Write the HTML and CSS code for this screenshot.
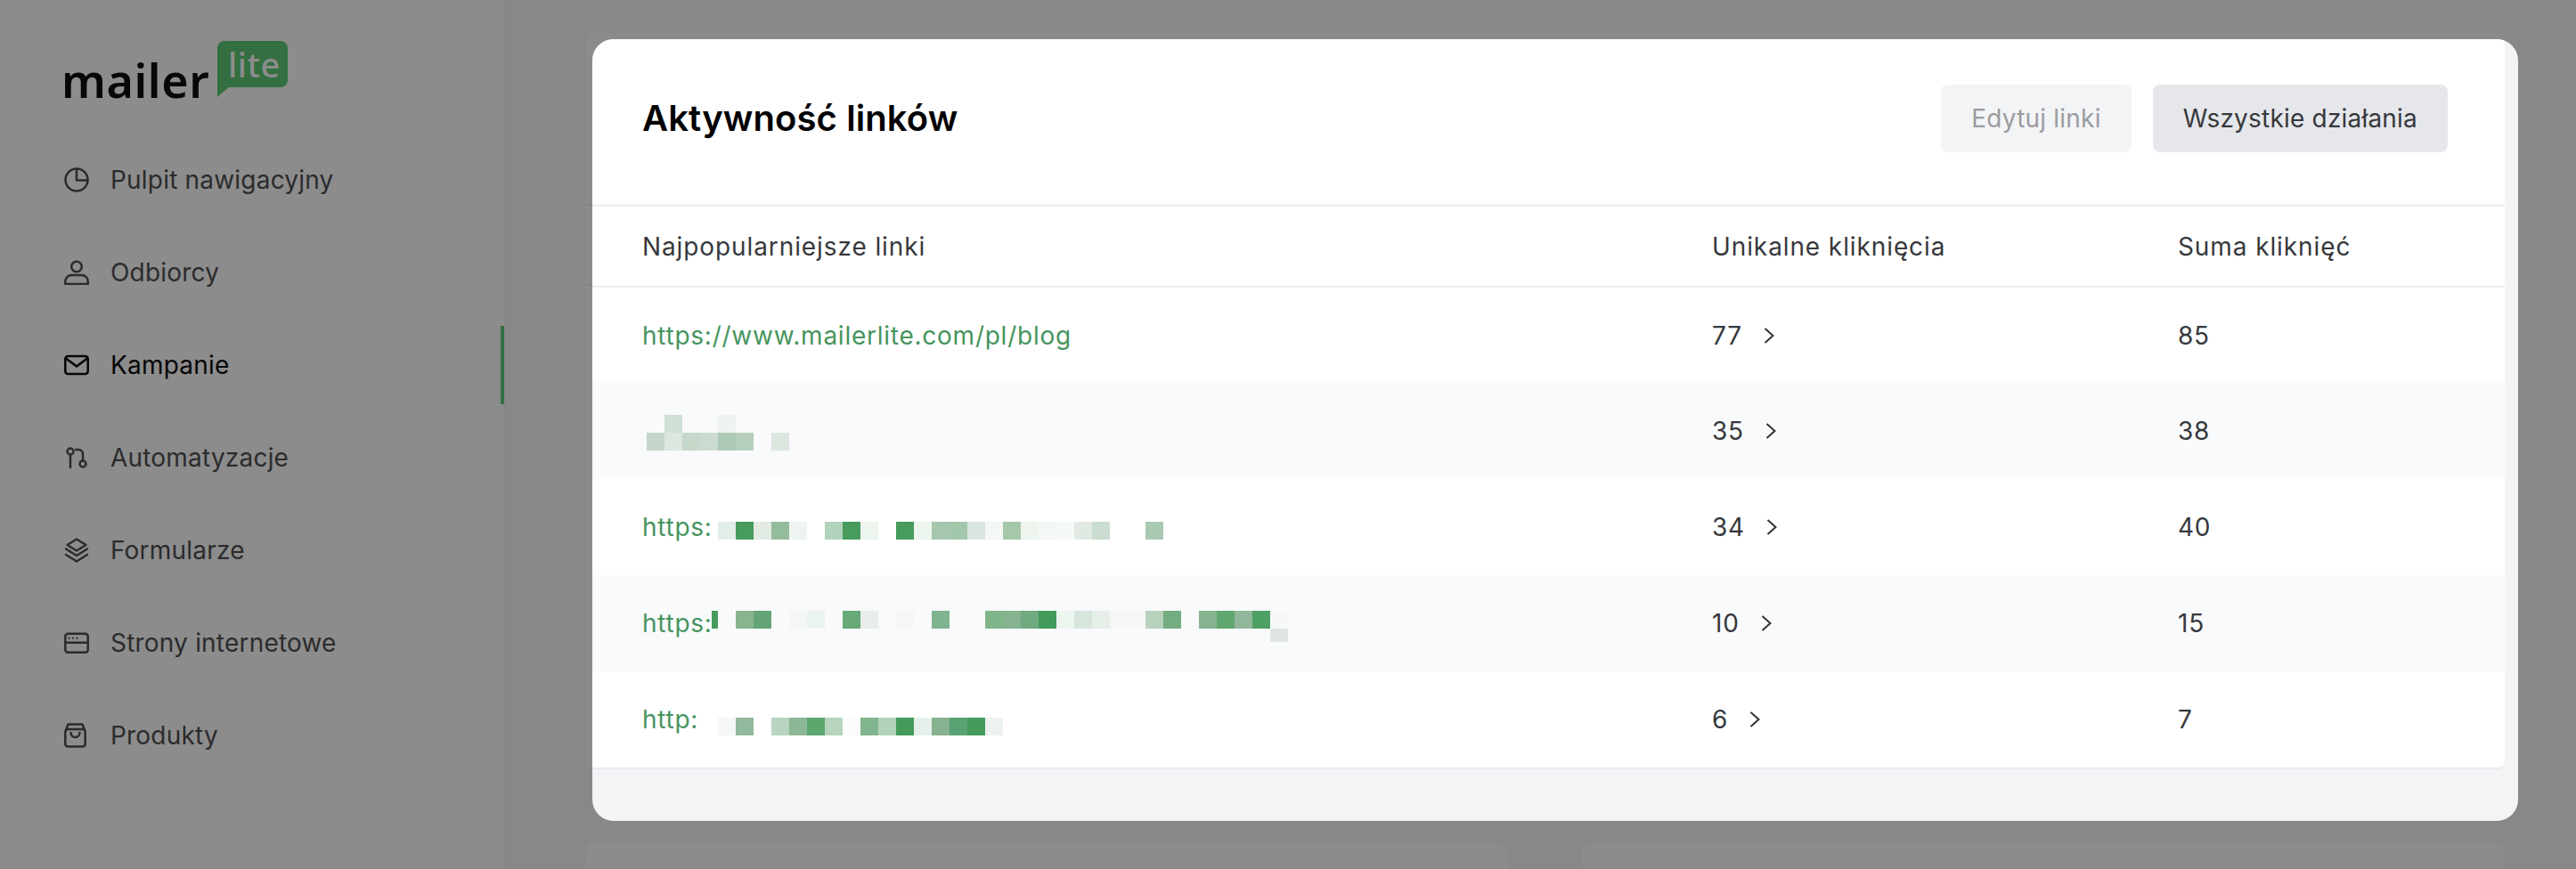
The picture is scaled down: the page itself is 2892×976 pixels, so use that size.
FILE: index.html
```html
<!DOCTYPE html>
<html lang="pl">
<head>
  <meta charset="utf-8">
  <title>Aktywność linków</title>
  <link rel="stylesheet" href="styles.css">
</head>
<body>
  <div class="page">
    <aside class="sidebar">
      <div class="logo">
        <span class="logo-mailer">mailer</span>
        <span class="logo-lite">
          <svg class="logo-bubble" width="79" height="63" viewBox="0 0 79 63"><path d="M8 0h63a8 8 0 0 1 8 8v36a8 8 0 0 1-8 8H13L0 63V8a8 8 0 0 1 8-8z"/></svg>
          <span class="logo-lite-text">lite</span>
        </span>
      </div>
      <nav class="nav">
        <a class="nav-item">
          <svg class="nav-icon" viewBox="0 0 28 28"><circle cx="14" cy="14" r="12.5"/><path d="M14 2v12.5h12.5"/></svg>
          Pulpit nawigacyjny
        </a>
        <a class="nav-item">
          <svg class="nav-icon" viewBox="0 0 28 28"><circle cx="14" cy="7.5" r="5.8"/><path d="M1.3 27v-3a7 7 0 0 1 7-7h11.4a7 7 0 0 1 7 7v3z"/></svg>
          Odbiorcy
        </a>
        <a class="nav-item active">
          <svg class="nav-icon" viewBox="0 0 28 28"><rect x="1.3" y="4" width="25.4" height="20" rx="3"/><path d="M2 6.5l12 9 12-9"/></svg>
          Kampanie
        </a>
        <a class="nav-item">
          <svg class="nav-icon" viewBox="0 0 28 28"><circle cx="7" cy="7" r="3.5"/><path d="M7 10.5V25M13 5h3a5 5 0 0 1 5 5v7.5"/><circle cx="21" cy="21" r="3.5"/></svg>
          Automatyzacje
        </a>
        <a class="nav-item">
          <svg class="nav-icon" viewBox="0 0 28 28"><path d="M14 1.5l10.5 6.5L14 14.5 3.500 8z"/><path d="M2 12.500l12 7.500 12-7.500M2 19l12 7.500L26 19"/></svg>
          Formularze
        </a>
        <a class="nav-item">
          <svg class="nav-icon" viewBox="0 0 28 28"><rect x="1.300" y="3.800" width="25.400" height="21" rx="3"/><path d="M1.300 13.800h25.400"/><circle class="dot" cx="5.500" cy="8.800" r="1.100"/><circle class="dot" cx="10" cy="8.800" r="1.100"/><circle class="dot" cx="14.500" cy="8.800" r="1.100"/></svg>
          Strony internetowe
        </a>
        <a class="nav-item">
          <svg class="nav-icon" viewBox="0 0 28 28"><rect x="1.300" y="7" width="22.400" height="19.500" rx="3"/><path d="M2 8l2.500-6.500h16L23 8M7.500 11a5 5 0 0 0 10 0"/></svg>
          Produkty
        </a>
      </nav>
    </aside>

    <main class="content">
      <section class="card card-wide">
        <div class="card-head"></div>
        <div class="card-cols"></div>
      </section>
      <section class="card"></section>
      <section class="card"></section>
    </main>

    <div class="modal">
      <div class="panel">
        <header class="panel-head">
          <h2 class="panel-title">Aktywność linków</h2>
          <div class="panel-actions">
            <button class="btn btn-disabled">Edytuj linki</button>
            <button class="btn">Wszystkie działania</button>
          </div>
        </header>
        <table class="links">
          <thead>
            <tr>
              <th>Najpopularniejsze linki</th>
              <th>Unikalne kliknięcia</th>
              <th>Suma kliknięć</th>
            </tr>
          </thead>
          <tbody>
            <tr>
              <td><a class="link">https://www.mailerlite.com/pl/blog</a></td>
              <td><span class="count">77 <svg class="chevron" viewBox="0 0 12 18"><path d="M1.500 1l9 8-9 8"/></svg></span></td>
              <td>85</td>
            </tr>
            <tr>
              <td>
                <svg class="mosaic" width="760" height="108">
                  <rect x="20" y="36" width="20" height="20" fill="#cfe0d6"/>
                  <rect x="80" y="36" width="20" height="20" fill="#eff3f0"/>
                  <rect x="0" y="56" width="20" height="20" fill="#c4d6cb"/>
                  <rect x="20" y="56" width="20" height="20" fill="#dde7e0"/>
                  <rect x="40" y="56" width="20" height="20" fill="#c5d8ca"/>
                  <rect x="60" y="56" width="20" height="20" fill="#cbdbd0"/>
                  <rect x="80" y="56" width="20" height="20" fill="#abc9b5"/>
                  <rect x="100" y="56" width="20" height="20" fill="#b5cfbc"/>
                  <rect x="140" y="56" width="20" height="20" fill="#dbe6df"/>
                </svg>
              </td>
              <td><span class="count">35 <svg class="chevron" viewBox="0 0 12 18"><path d="M1.500 1l9 8-9 8"/></svg></span></td>
              <td>38</td>
            </tr>
            <tr>
              <td>
                <a class="link">https:</a>
                <svg class="mosaic" width="760" height="108">
                  <rect x="80" y="48" width="20" height="20" fill="#e3eee8"/>
                  <rect x="100" y="48" width="20" height="20" fill="#479b5d"/>
                  <rect x="120" y="48" width="20" height="20" fill="#e2eae4"/>
                  <rect x="140" y="48" width="20" height="20" fill="#93bc9c"/>
                  <rect x="160" y="48" width="20" height="20" fill="#eef5f0"/>
                  <rect x="200" y="48" width="20" height="20" fill="#b1d2bc"/>
                  <rect x="220" y="48" width="20" height="20" fill="#479b5d"/>
                  <rect x="240" y="48" width="20" height="20" fill="#ecf5ee"/>
                  <rect x="280" y="48" width="20" height="20" fill="#479b5d"/>
                  <rect x="300" y="48" width="20" height="20" fill="#ecf5ee"/>
                  <rect x="320" y="48" width="20" height="20" fill="#a7c6ae"/>
                  <rect x="340" y="48" width="20" height="20" fill="#a3c7ab"/>
                  <rect x="360" y="48" width="20" height="20" fill="#dbe5df"/>
                  <rect x="380" y="48" width="20" height="20" fill="#f4f8f5"/>
                  <rect x="400" y="48" width="20" height="20" fill="#a5c8aa"/>
                  <rect x="420" y="48" width="20" height="20" fill="#eef5ef"/>
                  <rect x="440" y="48" width="20" height="20" fill="#f3f8f4"/>
                  <rect x="460" y="48" width="20" height="20" fill="#f6faf6"/>
                  <rect x="480" y="48" width="20" height="20" fill="#e1e9e3"/>
                  <rect x="500" y="48" width="20" height="20" fill="#c9dccf"/>
                  <rect x="560" y="48" width="20" height="20" fill="#a9c9b2"/>
                </svg>
              </td>
              <td><span class="count">34 <svg class="chevron" viewBox="0 0 12 18"><path d="M1.500 1l9 8-9 8"/></svg></span></td>
              <td>40</td>
            </tr>
            <tr>
              <td>
                <a class="link">https:</a>
                <svg class="mosaic" width="760" height="108">
                  <rect x="73" y="40" width="7" height="20" fill="#479b5d"/>
                  <rect x="100" y="40" width="20" height="20" fill="#88b490"/>
                  <rect x="120" y="40" width="20" height="20" fill="#64a575"/>
                  <rect x="160" y="40" width="20" height="20" fill="#f5f7f6"/>
                  <rect x="180" y="40" width="20" height="20" fill="#ebf3ee"/>
                  <rect x="220" y="40" width="20" height="20" fill="#67a977"/>
                  <rect x="240" y="40" width="20" height="20" fill="#e8efea"/>
                  <rect x="280" y="40" width="20" height="20" fill="#f5f7f6"/>
                  <rect x="320" y="40" width="20" height="20" fill="#80b38f"/>
                  <rect x="340" y="40" width="20" height="20" fill="#f9faf9"/>
                  <rect x="380" y="40" width="20" height="20" fill="#80b58a"/>
                  <rect x="400" y="40" width="20" height="20" fill="#85b390"/>
                  <rect x="420" y="40" width="20" height="20" fill="#71a980"/>
                  <rect x="440" y="40" width="20" height="20" fill="#439b5b"/>
                  <rect x="460" y="40" width="20" height="20" fill="#edf5ef"/>
                  <rect x="480" y="40" width="20" height="20" fill="#d7e5dc"/>
                  <rect x="500" y="40" width="20" height="20" fill="#e6f0e8"/>
                  <rect x="520" y="40" width="20" height="20" fill="#f5f8f6"/>
                  <rect x="540" y="40" width="20" height="20" fill="#f5f8f6"/>
                  <rect x="560" y="40" width="20" height="20" fill="#b7d1bc"/>
                  <rect x="580" y="40" width="20" height="20" fill="#72ac7f"/>
                  <rect x="620" y="40" width="20" height="20" fill="#85b28f"/>
                  <rect x="640" y="40" width="20" height="20" fill="#60a66f"/>
                  <rect x="660" y="40" width="20" height="20" fill="#92b69a"/>
                  <rect x="680" y="40" width="20" height="20" fill="#4da165"/>
                  <rect x="700" y="40" width="20" height="20" fill="#f7f9f7"/>
                  <rect x="700" y="60" width="20" height="15" fill="#dfe6e2"/>
                </svg>
              </td>
              <td><span class="count">10 <svg class="chevron" viewBox="0 0 12 18"><path d="M1.500 1l9 8-9 8"/></svg></span></td>
              <td>15</td>
            </tr>
            <tr>
              <td>
                <a class="link">http:</a>
                <svg class="mosaic" width="760" height="108">
                  <rect x="80" y="52" width="20" height="20" fill="#f5f8f6"/>
                  <rect x="100" y="52" width="20" height="20" fill="#92b99b"/>
                  <rect x="140" y="52" width="20" height="20" fill="#b9d4c0"/>
                  <rect x="160" y="52" width="20" height="20" fill="#8cb897"/>
                  <rect x="180" y="52" width="20" height="20" fill="#5ca76e"/>
                  <rect x="200" y="52" width="20" height="20" fill="#b7d4bd"/>
                  <rect x="220" y="52" width="20" height="20" fill="#fbfcfb"/>
                  <rect x="240" y="52" width="20" height="20" fill="#80b58e"/>
                  <rect x="260" y="52" width="20" height="20" fill="#b3d3b9"/>
                  <rect x="280" y="52" width="20" height="20" fill="#439b5b"/>
                  <rect x="300" y="52" width="20" height="20" fill="#e6f0ea"/>
                  <rect x="320" y="52" width="20" height="20" fill="#87b28f"/>
                  <rect x="340" y="52" width="20" height="20" fill="#58a273"/>
                  <rect x="360" y="52" width="20" height="20" fill="#439b5b"/>
                  <rect x="380" y="52" width="20" height="20" fill="#ecf2ee"/>
                </svg>
              </td>
              <td><span class="count">6 <svg class="chevron" viewBox="0 0 12 18"><path d="M1.500 1l9 8-9 8"/></svg></span></td>
              <td>7</td>
            </tr>
          </tbody>
        </table>
      </div>
    </div>
  </div>
</body>
</html>
```

FILE: styles.css
```css
* {
  box-sizing: border-box;
}
body {
  margin: 0;
  font-family: "Inter", "Liberation Sans", sans-serif;
  background: #87888a;
}
.page {
  position: relative;
  display: flex;
  height: 976px;
  overflow: hidden;
}

/* sidebar */
.sidebar {
  flex: 0 0 567px;
  padding: 46px 0 0 72px;
  background: #8c8c8c;
  border-right: 1px solid #858586;
}
.logo {
  position: relative;
  height: 64px;
}
.logo-mailer {
  position: absolute;
  left: -3px;
  top: 8px;
  font-family: "Noto Sans", sans-serif;
  font-size: 52px;
  font-weight: 600;
  line-height: 71px;
  letter-spacing: 0.6px;
  color: #070707;
}
.logo-lite {
  position: absolute;
  left: 172px;
  top: 0;
  width: 79px;
  height: 63px;
}
.logo-bubble {
  display: block;
  fill: #346f41;
}
.logo-lite-text {
  position: absolute;
  left: 12px;
  top: 0;
  font-family: "Noto Sans", sans-serif;
  font-size: 38px;
  font-weight: 500;
  line-height: 52px;
  letter-spacing: 0.5px;
  color: #8c8c8c;
}
.nav {
  display: flex;
  flex-direction: column;
  gap: 16px;
  margin-top: 48px;
}
.nav-item {
  position: relative;
  display: flex;
  align-items: center;
  gap: 24px;
  height: 88px;
  font-size: 28px;
  letter-spacing: 0.2px;
  color: #2b2b2c;
}
.nav-item.active {
  color: #060606;
}
.nav-item.active::after {
  content: "";
  position: absolute;
  top: 0;
  right: 0;
  width: 4px;
  height: 88px;
  background: #346f41;
}
.nav-icon {
  flex: 0 0 28px;
  width: 28px;
  height: 28px;
  fill: none;
  stroke: currentColor;
  stroke-width: 2.5;
  stroke-linecap: round;
  stroke-linejoin: round;
}
.nav-icon .dot {
  fill: currentColor;
  stroke: none;
}

/* dimmed cards behind the modal */
.content {
  flex: 1;
  display: grid;
  grid-template-columns: 1035px 1035px;
  grid-template-rows: 825px 200px;
  gap: 84px 83px;
  padding: 37px 0 0 91px;
}
.card {
  background: #8b8b8b;
  border-radius: 8px;
}
.card-wide {
  grid-column: 1 / 3;
}
.card-head {
  height: 194px;
  border-bottom: 2px solid #838384;
}
.card-cols {
  height: 90px;
  border-bottom: 2px solid #838384;
}

/* modal */
.modal {
  position: absolute;
  left: 665px;
  top: 44px;
  width: 2162px;
  height: 878px;
  overflow: hidden;
  background: #f3f4f6;
  border-radius: 24px;
}
.panel {
  width: 2147px;
  background: #fff;
  border-bottom: 2px solid #eaebef;
  border-radius: 0 0 8px 0;
}
.panel-head {
  display: flex;
  align-items: flex-start;
  justify-content: space-between;
  height: 188px;
  padding: 51px 64px 0 56px;
  border-bottom: 2px solid #ebebf0;
}
.panel-title {
  margin: 0;
  font-size: 40px;
  font-weight: 600;
  line-height: 76px;
  letter-spacing: 0.1px;
  color: #000;
}
.panel-actions {
  display: flex;
  gap: 24px;
}
.btn {
  height: 76px;
  padding: 0 34px;
  border: none;
  border-radius: 8px;
  background: #e5e7eb;
  font-family: inherit;
  font-size: 28px;
  letter-spacing: 0.2px;
  color: #37383c;
}
.btn-disabled {
  background: #f3f4f6;
  color: #9a9b9f;
}

.links {
  width: 100%;
  border-collapse: collapse;
  table-layout: fixed;
  font-size: 28px;
  letter-spacing: 0.75px;
  color: #37383c;
}
.links th {
  height: 90px;
  padding: 0;
  border-bottom: 2px solid #ebebf0;
  font-weight: 400;
  letter-spacing: 0.9px;
  text-align: left;
}
.links td {
  position: relative;
  height: 108px;
  padding: 0;
}
.links th:nth-child(1),
.links td:nth-child(1) {
  width: 1257px;
  padding-left: 56px;
}
.links th:nth-child(2) {
  width: 523px;
}
.links tbody tr:nth-child(even) {
  background: #f9fafb;
}
.link {
  color: #46945e;
}
.count {
  display: inline-flex;
  align-items: center;
  gap: 24px;
}
.chevron {
  width: 12px;
  height: 18px;
  fill: none;
  stroke: #333;
  stroke-width: 2;
}
/* pixelated redaction over the url */
.mosaic {
  position: absolute;
  left: 61px;
  top: 0;
}
```
